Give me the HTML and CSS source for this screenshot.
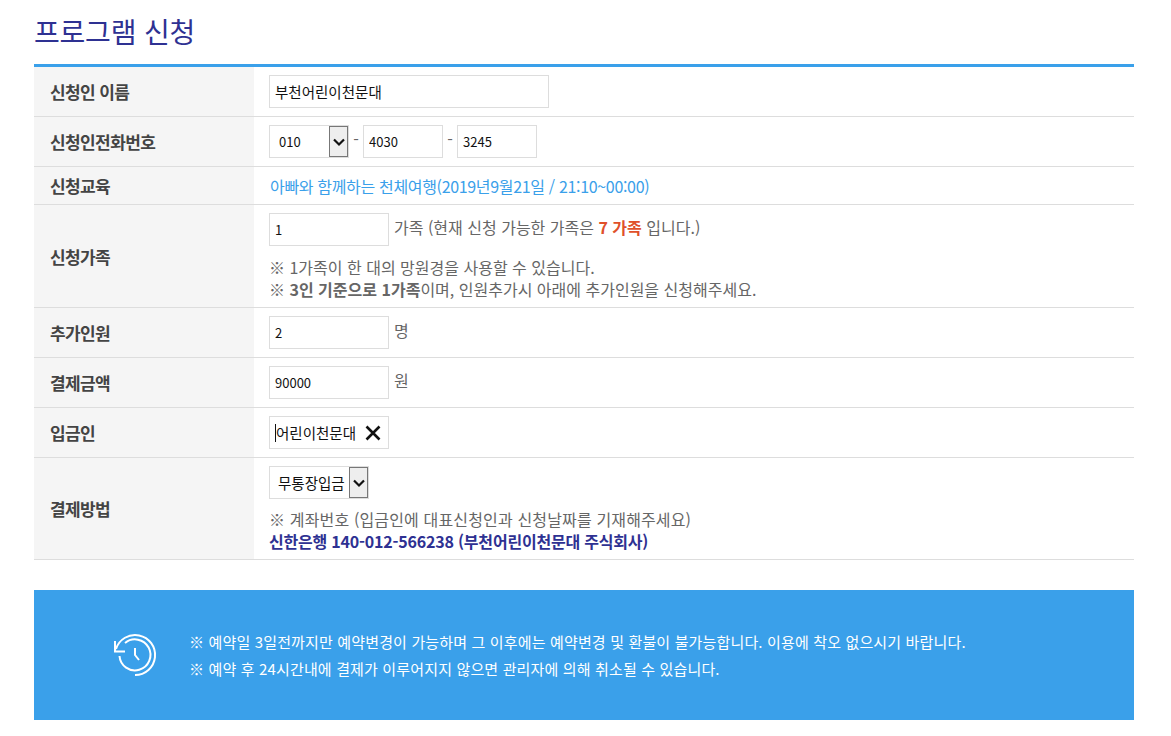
FILE: index.html
```html
<!DOCTYPE html>
<html lang="ko">
<head>
    <meta charset="UTF-8">
    <title>프로그램 신청</title>
    <link rel="stylesheet" href="styles.css">
</head>
<body>
    <div class="container">
        <h2 class="title">프로그램 신청</h2>

        <table class="form-table">
            <tr>
                <th>신청인 이름</th>
                <td><input class="field field-name" type="text" value="부천어린이천문대"></td>
            </tr>
            <tr>
                <th>신청인전화번호</th>
                <td>
                    <div class="inline">
                        <div class="select-wrap select-phone">
                            <select class="field"><option>010</option></select>
                            <span class="arrow"><svg width="14" height="10" viewBox="0 0 14 10"><path d="M2 2.500 7 7.500 12 2.500" fill="none" stroke="#111" stroke-width="2.200"/></svg></span>
                        </div>
                        <span class="dash">-</span>
                        <input class="field field-phone" type="text" value="4030">
                        <span class="dash">-</span>
                        <input class="field field-phone" type="text" value="3245">
                    </div>
                </td>
            </tr>
            <tr class="row-course">
                <th>신청교육</th>
                <td class="course">아빠와 함께하는 천체여행(2019년9월21일 / 21:10~00:00)</td>
            </tr>
            <tr>
                <th>신청가족</th>
                <td class="cell-family">
                    <div class="inline">
                        <input class="field field-num" type="text" value="1">
                        <span class="unit">가족 (현재 신청 가능한 가족은 <b class="red">7 가족</b> 입니다.)</span>
                    </div>
                    <p class="note note-family">※ 1가족이 한 대의 망원경을 사용할 수 있습니다.<br>※ <b>3인 기준으로 1가족</b>이며, 인원추가시 아래에 추가인원을 신청해주세요.</p>
                </td>
            </tr>
            <tr>
                <th>추가인원</th>
                <td>
                    <div class="inline">
                        <input class="field field-num" type="text" value="2">
                        <span class="unit">명</span>
                    </div>
                </td>
            </tr>
            <tr>
                <th>결제금액</th>
                <td>
                    <div class="inline">
                        <input class="field field-num" type="text" value="90000">
                        <span class="unit">원</span>
                    </div>
                </td>
            </tr>
            <tr>
                <th>입금인</th>
                <td>
                    <div class="field field-num field-focus">
                        <span class="caret"></span>어린이천문대
                        <svg class="clear" width="16" height="16" viewBox="0 0 16 16"><path d="M1.500 1.500 14.500 14.500M14.500 1.500 1.500 14.500" stroke="#111" stroke-width="2.600" fill="none"/></svg>
                    </div>
                </td>
            </tr>
            <tr>
                <th>결제방법</th>
                <td class="cell-pay">
                    <div class="select-wrap select-pay">
                        <select class="field"><option>무통장입금</option></select>
                        <span class="arrow"><svg width="14" height="10" viewBox="0 0 14 10"><path d="M2 2.500 7 7.500 12 2.500" fill="none" stroke="#111" stroke-width="2.200"/></svg></span>
                    </div>
                    <p class="note note-pay">※ 계좌번호 (입금인에 대표신청인과 신청날짜를 기재해주세요)<br><b class="navy">신한은행 140-012-566238 (부천어린이천문대 주식회사)</b></p>
                </td>
            </tr>
        </table>

        <div class="notice">
            <svg class="notice-icon" width="46" height="46" viewBox="0 0 46 46" fill="none" stroke="#fff" stroke-width="2">
                <path d="M4 17A20 20 0 1 1 23 43"/>
                <path d="M3 9V19.500H13"/>
                <path d="M7.500 24A15.500 15.500 0 1 0 13 11"/>
                <path d="M23 16V23L27 28"/>
            </svg>
            <div class="notice-text">
                <p>※ 예약일 3일전까지만 예약변경이 가능하며 그 이후에는 예약변경 및 환불이 불가능합니다. 이용에 착오 없으시기 바랍니다.</p>
                <p>※ 예약 후 24시간내에 결제가 이루어지지 않으면 관리자에 의해 취소될 수 있습니다.</p>
            </div>
        </div>
    </div>
</body>
</html>
```

FILE: styles.css
```css
body {
    margin: 0;
    padding: 0;
    background-color: #fff;
    font-family: "Noto Sans CJK KR", "Noto Sans", sans-serif;
    font-size: 16px;
    color: #666;
}

.container {
    width: 1100px;
    margin-left: 34px;
    padding-bottom: 16px;
}

.title {
    margin: 0;
    height: 64px;
    font-size: 28px;
    font-weight: 400;
    line-height: 62px;
    color: #2e3192;
    letter-spacing: -0.2px;
}

.form-table {
    width: 100%;
    border-collapse: collapse;
    border-top: 3px solid #3aa0ea;
}

.form-table tr {
    height: 50px;
    border-bottom: 1px solid #ddd;
}

.form-table .row-course {
    height: 38px;
}

.form-table th {
    width: 220px;
    padding: 0 0 0 16px;
    box-sizing: border-box;
    background-color: #f5f5f5;
    text-align: left;
    font-size: 17px;
    font-weight: 700;
    color: #444;
    letter-spacing: -0.6px;
}

.form-table td {
    padding: 8px 15px;
}

.form-table .cell-family {
    padding-bottom: 7px;
}

.form-table .cell-pay {
    padding-bottom: 7px;
}

.field {
    box-sizing: border-box;
    height: 33px;
    padding: 0 5px;
    border: 1px solid #ddd;
    background-color: #fff;
    font-family: inherit;
    font-size: 13px;
    color: #111;
    border-radius: 0;
    outline: none;
}

.field-name {
    width: 280px;
    font-size: 14.500px;
}

.field-phone {
    width: 80px;
}

.field-num {
    width: 120px;
}

.field-focus {
    display: flex;
    align-items: center;
    font-size: 14.500px;
}

.caret {
    width: 1px;
    height: 18px;
    background-color: #111;
}

.clear {
    margin-left: 9px;
}

.inline {
    display: flex;
    align-items: flex-start;
}

.dash {
    width: 14px;
    text-align: center;
    line-height: 28px;
}

.unit {
    margin-left: 5px;
    line-height: 28px;
}

.red {
    color: #e0502a;
}

.navy {
    color: #2e3192;
    letter-spacing: -0.2px;
}

.form-table .course {
    padding: 0 15px 0 16px;
    color: #3aa0ea;
    letter-spacing: -0.33px;
}

.note {
    margin: 0;
    line-height: 22px;
}

.note-family {
    margin-top: 10px;
}

.note-pay {
    margin-top: 9px;
    letter-spacing: 0.15px;
}

.select-wrap {
    position: relative;
    height: 33px;
}

.select-wrap select {
    width: 100%;
    appearance: none;
    padding-left: 9px;
}

.select-phone {
    width: 80px;
}

.select-pay {
    width: 100px;
}

.select-pay select {
    font-size: 14.500px;
    padding-left: 8px;
}

.arrow {
    position: absolute;
    top: 1px;
    right: 1px;
    width: 19px;
    height: 31px;
    box-sizing: border-box;
    display: flex;
    align-items: center;
    justify-content: center;
    border: 1px solid #777;
    background-color: #eee;
}

.notice {
    display: flex;
    align-items: center;
    height: 130px;
    margin-top: 30px;
    padding-left: 78px;
    background-color: #3aa0ea;
    color: #fff;
}

.notice-icon {
    flex-shrink: 0;
}

.notice-text {
    margin-left: 31px;
    letter-spacing: 0.15px;
    font-size: 15px;
}

.notice-text p {
    margin: 0;
    line-height: 27px;
}
```
